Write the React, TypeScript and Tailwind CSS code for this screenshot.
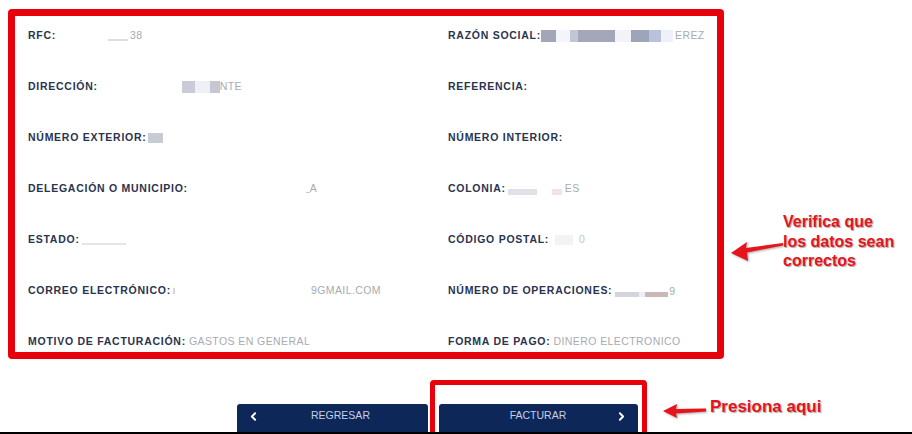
import { ChevronLeft, ChevronRight } from 'lucide-react';
import type { ReactNode } from 'react';

const Field = ({ label, children }: { label: string; children?: ReactNode }) => (
    <div className="flex items-center h-[14px] whitespace-nowrap">
        <span className="text-[10.5px] font-bold tracking-[0.07em] text-[#2a344f]">{label}</span>
        {children}
    </div>
);

const Val = ({ children, className = '' }: { children: ReactNode; className?: string }) => (
    <span className={`text-[10.5px] tracking-[0.04em] text-[#a6abb3] ${className}`}>{children}</span>
);

export default function App() {
    return (
        <div className="relative w-[912px] h-[434px] overflow-hidden bg-white flex flex-col font-['Liberation_Sans',Arial,sans-serif]">
            {/* datos del cliente */}
            <div className="pt-[9px] pl-2">
                <div className="w-[716px] h-[350px] border-[7px] border-[#e8000b] rounded-[4px] pt-[13px] pl-[13px] pr-2">
                    <div className="grid grid-cols-[420px_1fr] gap-y-[37px]">
                        <Field label="RFC:">
                            <span className="ml-[52px] w-[20px] h-[2px] bg-[#dcdee3] self-end mb-[2px]" />
                            <Val className="ml-[2px]">38</Val>
                        </Field>
                        <Field label="RAZÓN SOCIAL:">
                            <span className="w-[15px] h-[12px] bg-[#a3a6b8]" />
                            <span className="w-[14px] h-[12px] bg-[#f4f5f8]" />
                            <span className="w-[8px] h-[12px] bg-[#c1c6d6]" />
                            <span className="w-[37px] h-[12px] bg-[#a3a7b9]" />
                            <span className="w-[16px] h-[12px] bg-[#f2f3f7]" />
                            <span className="w-[18px] h-[12px] bg-[#9ea4ba]" />
                            <span className="w-[12px] h-[12px] bg-[#b8c2dc]" />
                            <span className="w-[12px] h-[12px] bg-[#eef1f7]" />
                            <Val className="ml-[2px]">EREZ</Val>
                        </Field>

                        <Field label="DIRECCIÓN:">
                            <span className="ml-[84px] w-[13px] h-[12px] bg-[#c9ccd6]" />
                            <span className="w-[15px] h-[12px] bg-[#eef0f5]" />
                            <span className="w-[10px] h-[12px] bg-[#c5c8d3]" />
                            <Val>NTE</Val>
                        </Field>
                        <Field label="REFERENCIA:" />

                        <Field label="NÚMERO EXTERIOR:">
                            <span className="ml-[1px] w-[15px] h-[10px] bg-[#c8cbd4]" />
                        </Field>
                        <Field label="NÚMERO INTERIOR:" />

                        <Field label="DELEGACIÓN O MUNICIPIO:">
                            <span className="ml-[118px] w-[4px] h-[1px] bg-[#c7cad1] self-end mb-[3px]" />
                            <Val>A</Val>
                        </Field>
                        <Field label="COLONIA:">
                            <span className="ml-[2px] w-[29px] h-[6px] bg-[#e0e1e6] self-end mb-[1px]" />
                            <span className="ml-[15px] w-[10px] h-[6px] bg-[#f2e4e6] self-end mb-[1px]" />
                            <Val className="ml-[3px]">ES</Val>
                        </Field>

                        <Field label="ESTADO:">
                            <span className="ml-[2px] w-[44px] h-[2px] bg-[#e3e5ea] self-end mb-[2px]" />
                        </Field>
                        <Field label="CÓDIGO POSTAL:">
                            <span className="ml-[6px] w-[18px] h-[10px] bg-[#f3f3f5]" />
                            <Val className="ml-[6px] text-[#c2c5cb]">0</Val>
                        </Field>

                        <Field label="CORREO ELECTRÓNICO:">
                            <span className="ml-[2px] w-[2px] h-[6px] bg-[#d5d7dc]" />
                            <Val className="ml-[136px]">9GMAIL.COM</Val>
                        </Field>
                        <Field label="NÚMERO DE OPERACIONES:">
                            <span className="ml-[3px] w-[24px] h-[5px] bg-[#d3d5de] self-end mb-[1px]" />
                            <span className="w-[6px] h-[5px] bg-[#eef0f5] self-end mb-[1px]" />
                            <span className="w-[23px] h-[5px] bg-[#c9b8b6] self-end mb-[1px]" />
                            <Val className="ml-[1px] self-start text-[9px]">9</Val>
                        </Field>

                        <Field label="MOTIVO DE FACTURACIÓN:">
                            <Val className="ml-[3px]">GASTOS EN GENERAL</Val>
                        </Field>
                        <Field label="FORMA DE PAGO:">
                            <Val className="ml-[3px]">DINERO ELECTRONICO</Val>
                        </Field>
                    </div>
                </div>
            </div>

            {/* botones */}
            <div className="mt-[21px] h-[52px] flex items-start pl-[237px] overflow-hidden">
                <button className="mt-[24px] w-[191px] h-[34px] pb-[10px] pl-[10px] pr-[7px] flex items-center bg-[#0e2759] rounded-t-[3px] text-[#c5d0e6] text-[10.5px]">
                    <ChevronLeft size={13} strokeWidth={3.5} className="text-white" />
                    <span className="flex-1 text-center">REGRESAR</span>
                </button>
                <div className="ml-[2px] w-[217px] h-[60px] border-[5px] border-[#e8000b] rounded-t-[4px] px-1 pt-[19px]">
                    <button className="w-[199px] h-[34px] pb-[10px] pr-[10px] flex items-center bg-[#0e2759] rounded-t-[3px] text-[#c5d0e6] text-[10.5px]">
                        <span className="w-[22px]" />
                        <span className="flex-1 text-center">FACTURAR</span>
                        <ChevronRight size={13} strokeWidth={3.5} className="text-white" />
                    </button>
                </div>
            </div>
            <div className="h-[2px] bg-black" />

            {/* anotaciones */}
            <div className="absolute left-[783px] top-[212px] text-[16px] leading-[19.5px] font-bold text-[#e8141c] [text-shadow:1px_1px_1px_rgba(0,0,0,0.35)]">
                <div>Verifica que</div>
                <div>los datos sean</div>
                <div>correctos</div>
            </div>
            <svg className="absolute left-[725px] top-[235px] drop-shadow-[1px_1px_1px_rgba(0,0,0,0.35)]" width="62" height="30" viewBox="0 0 62 30">
                <path d="M6 18 L22 7 L21 13 L58 8 L58 10.5 L22 17.5 L23 26 Z" fill="#e8141c" />
            </svg>
            <div className="absolute left-[710px] top-[397px] text-[17px] leading-[20px] font-bold text-[#e8141c] [text-shadow:1px_1px_1px_rgba(0,0,0,0.35)]">
                Presiona aqui
            </div>
            <svg className="absolute left-[660px] top-[400px] drop-shadow-[1px_1px_1px_rgba(0,0,0,0.35)]" width="50" height="22" viewBox="0 0 50 22">
                <path d="M3 11 L17 4 L16 9 L46 8.5 L46 11.5 L16 13.5 L17 18 Z" fill="#e8141c" />
            </svg>
        </div>
    );
}
